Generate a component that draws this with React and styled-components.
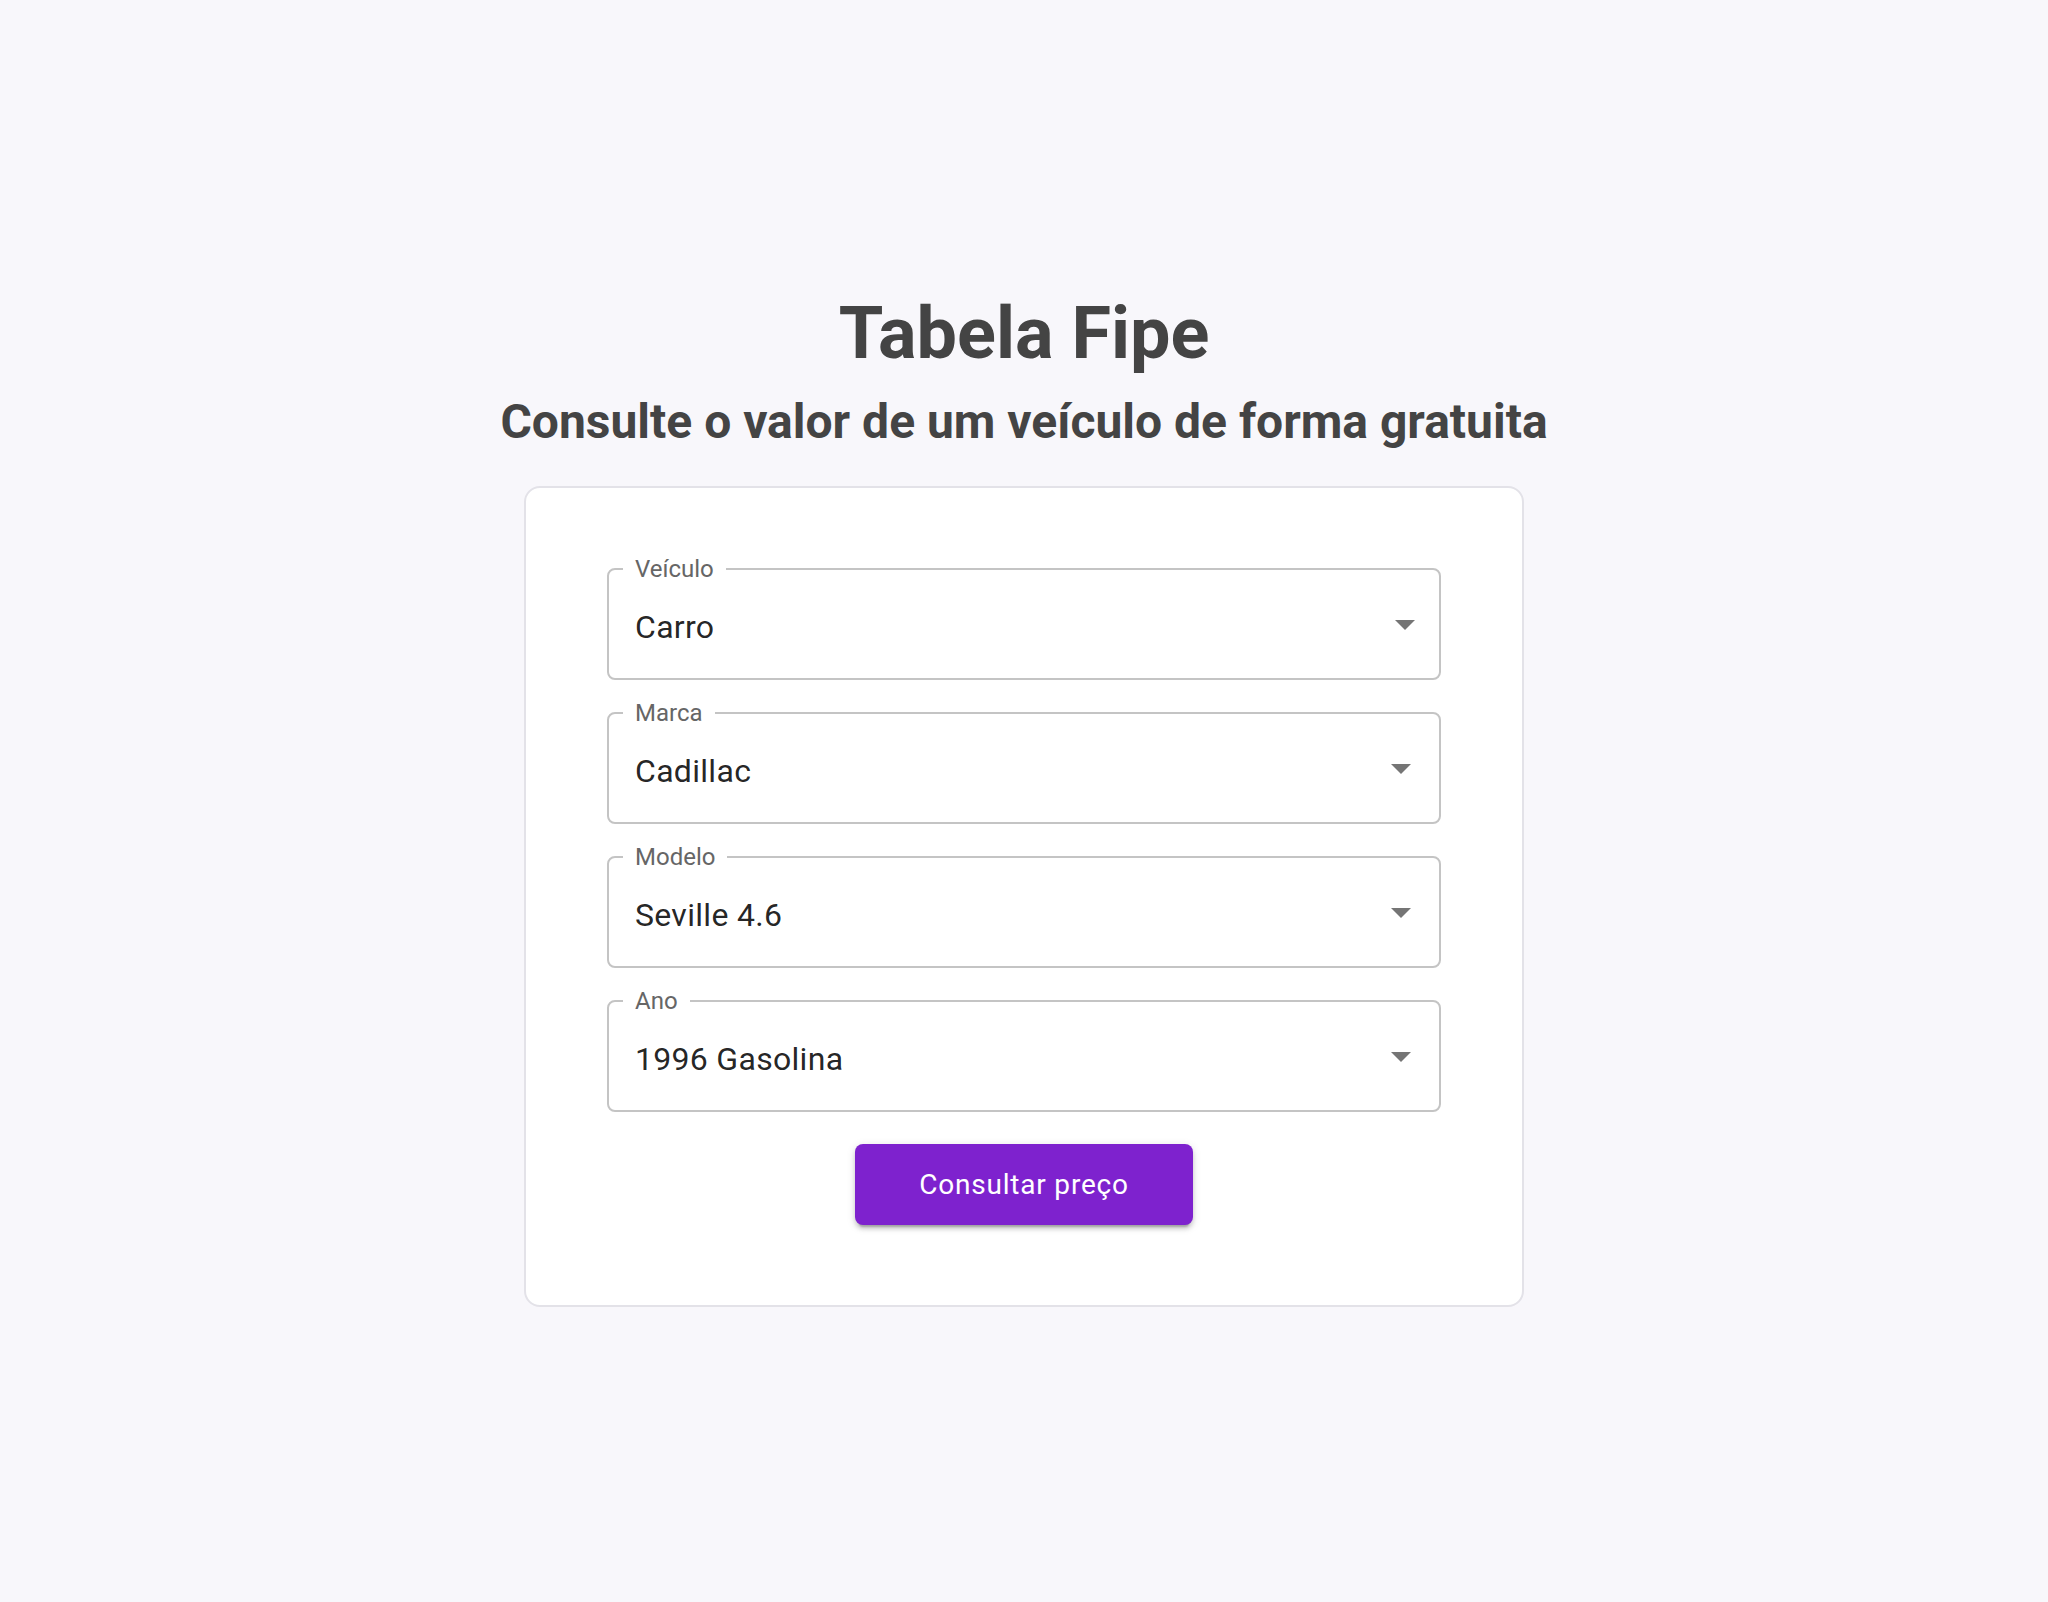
import React from "react";
import styled, { createGlobalStyle } from "styled-components";

const GlobalStyle = createGlobalStyle`
  * { box-sizing: border-box; }
  html, body { margin: 0; padding: 0; }
  body {
    background: #f8f7fb;
    font-family: Roboto, "Noto Sans", "Liberation Sans", sans-serif;
  }
`;

const Page = styled.main`
  min-height: 100vh;
  display: flex;
  flex-direction: column;
  align-items: center;
  justify-content: center;
  padding-bottom: 4px;
`;

const Title = styled.h1`
  margin: 0;
  font-size: 72px;
  line-height: 1.2;
  font-weight: 700;
  color: #444444;
  text-align: center;
`;

const Subtitle = styled.h2`
  margin: 16px 0 0;
  font-size: 48px;
  line-height: 1.2;
  font-weight: 700;
  color: #444444;
  text-align: center;
`;

const Card = styled.form`
  margin-top: 36px;
  width: 1000px;
  background: #ffffff;
  border: 2px solid #e3e2e8;
  border-radius: 16px;
  padding: 80px 81px;
  display: flex;
  flex-direction: column;
  gap: 32px;
`;

const Field = styled.div`
  position: relative;
  height: 112px;
  border: 2px solid #c4c4c4;
  border-radius: 8px;
  display: flex;
  align-items: center;
  padding: 6px ${(p) => (p.$tight ? 10 : 14)}px 0 26px;
`;

const Label = styled.span`
  position: absolute;
  top: -13px;
  left: 14px;
  padding: 0 12px;
  background: #ffffff;
  font-size: 24px;
  line-height: 1;
  color: #666666;
`;

const Value = styled.span`
  flex: 1;
  font-size: 32px;
  line-height: 46px;
  color: rgba(0, 0, 0, 0.87);
  letter-spacing: 0.3px;
`;

const Arrow = styled.svg`
  width: 48px;
  height: 48px;
  margin-top: -6px;
  fill: rgba(0, 0, 0, 0.54);
  flex-shrink: 0;
`;

const Button = styled.button`
  align-self: center;
  border: 0;
  border-radius: 8px;
  background: #7e22ce;
  color: #ffffff;
  font-family: inherit;
  font-size: 28px;
  font-weight: 400;
  letter-spacing: 0.8px;
  line-height: 1.75;
  padding: 16px 64px;
  cursor: pointer;
  box-shadow: 0 6px 2px -4px rgba(0, 0, 0, 0.2), 0 4px 4px 0 rgba(0, 0, 0, 0.14),
    0 2px 10px 0 rgba(0, 0, 0, 0.12);
`;

const fields = [
  { label: "Veículo", value: "Carro", tight: true },
  { label: "Marca", value: "Cadillac" },
  { label: "Modelo", value: "Seville 4.6" },
  { label: "Ano", value: "1996 Gasolina" },
];

function SelectField({ label, value, tight }) {
  return (
    <Field $tight={tight}>
      <Label>{label}</Label>
      <Value>{value}</Value>
      <Arrow viewBox="0 0 24 24" aria-hidden="true">
        <path d="M7 10l5 5 5-5z" />
      </Arrow>
    </Field>
  );
}

export default function App() {
  return (
    <>
      <GlobalStyle />
      <Page>
        <Title>Tabela Fipe</Title>
        <Subtitle>Consulte o valor de um veículo de forma gratuita</Subtitle>
        <Card onSubmit={(e) => e.preventDefault()}>
          {fields.map((f) => (
            <SelectField key={f.label} {...f} />
          ))}
          <Button type="submit">Consultar preço</Button>
        </Card>
      </Page>
    </>
  );
}
